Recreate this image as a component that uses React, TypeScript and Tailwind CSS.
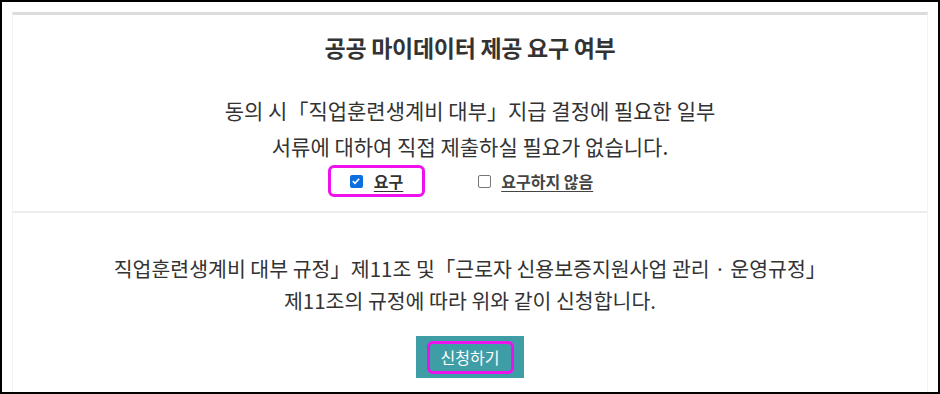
export default function App() {
  const font = { fontFamily: '"Noto Sans CJK KR", "Noto Sans", sans-serif' };
  return (
    <div
      className="box-border h-[394px] w-[940px] overflow-hidden border-2 border-black bg-white px-[10px] pt-[10px] text-[#333]"
      style={font}
    >
      <section className="h-full border-x border-t-[3px] border-x-[#f3f3f3] border-t-[#dcdcdc]">
        <div className="flex flex-col items-center">
          <h2 className="mt-[17px] text-[23px] font-bold leading-[30px] tracking-[-0.3px] text-[#333]">
            공공 마이데이터 제공 요구 여부
          </h2>
          <p className="mt-[30px] text-center text-[21px] leading-[36px] text-[#333]">
            동의 시「직업훈련생계비 대부」지급 결정에 필요한 일부
            <br />
            서류에 대하여 직접 제출하실 필요가 없습니다.
          </p>
          <div className="mr-[19px] mt-[1px] flex items-center gap-[53px]">
            <label className="flex h-[32px] items-center gap-[11px] rounded-[6px] border-[3px] border-[#ee11ee] px-[19px]">
              <span className="flex h-[13px] w-[13px] items-center justify-center rounded-[2px] bg-[#0b6fe0]">
                <svg viewBox="0 0 12 12" className="h-[10px] w-[10px]">
                  <path d="M2.2 6.2 L4.8 8.8 L9.8 3.2" fill="none" stroke="white" strokeWidth="1.9" />
                </svg>
              </span>
              <span className="text-[16px] font-bold leading-none underline underline-offset-[3px]">요구</span>
            </label>
            <label className="flex items-center gap-[10px]">
              <span className="h-[13px] w-[13px] rounded-[2px] border border-[#767676] bg-white" />
              <span className="text-[16px] font-bold leading-none text-[#444] underline underline-offset-[3px]">
                요구하지 않음
              </span>
            </label>
          </div>
        </div>
        <div className="mt-[14px] border-t-2 border-[#ededed]" />
        <div className="flex flex-col items-center">
          <p className="mt-[39px] text-center text-[20.5px] leading-[32px] text-[#333]">
            직업훈련생계비 대부 규정」제11조 및「근로자 신용보증지원사업 관리 · 운영규정」
            <br />
            제11조의 규정에 따라 위와 같이 신청합니다.
          </p>
          <button
            type="button"
            className="mt-[20px] flex h-[42px] w-[108px] items-center justify-center bg-[#3f9da5]"
          >
            <span className="flex h-[33px] w-[87px] items-center justify-center rounded-[6px] border-[3px] border-[#ee11ee] text-[16px] text-white">
              신청하기
            </span>
          </button>
        </div>
      </section>
    </div>
  );
}
